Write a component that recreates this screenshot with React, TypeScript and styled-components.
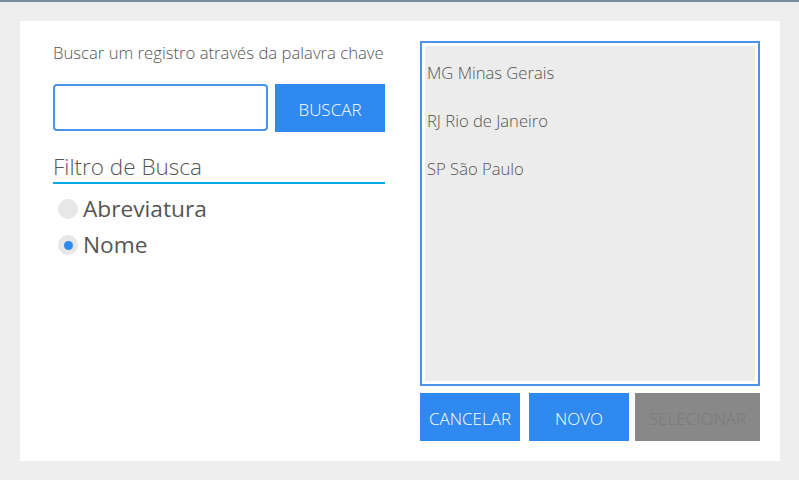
import React, { useState } from "react";
import styled, { createGlobalStyle } from "styled-components";

const GlobalStyle = createGlobalStyle`
  html, body {
    margin: 0;
    padding: 0;
    background: #eeeeee;
    font-family: "Open Sans", "Noto Sans", sans-serif;
  }
`;

const Page = styled.div`
  width: 799px;
  height: 480px;
  box-sizing: border-box;
  border-top: 2px solid #7a8b9d;
  padding: 19px 19px 19px 20px;
`;

const Panel = styled.div`
  height: 440px;
  box-sizing: border-box;
  background: #ffffff;
  padding: 20px 20px 20px 33px;
  display: grid;
  grid-template-columns: 332px 340px;
  column-gap: 35px;
`;

const LeftColumn = styled.div`
  display: flex;
  flex-direction: column;
`;

const Hint = styled.p`
  margin: 0;
  padding-top: 2px;
  font-size: 16.7px;
  font-weight: 300;
  color: #555555;
  line-height: 20px;
  white-space: nowrap;
`;

const SearchRow = styled.div`
  display: flex;
  gap: 7px;
  margin-top: 21px;
`;

const SearchInput = styled.input`
  width: 215px;
  height: 47px;
  box-sizing: border-box;
  border: 2px solid #4a92ea;
  border-radius: 4px;
  outline: none;
  font-size: 16px;
  padding: 0 8px;
`;

const Button = styled.button<{ $disabled?: boolean; $width: number }>`
  width: ${(p) => p.$width}px;
  height: 48px;
  border: none;
  border-radius: 0;
  background: ${(p) => (p.$disabled ? "#888888" : "#2f89ee")};
  color: ${(p) => (p.$disabled ? "#7a7a7a" : "#ffffff")};
  font-family: "Open Sans", sans-serif;
  font-size: 17px;
  font-weight: 300;
  padding: 2px 0 0;
  white-space: nowrap;
  cursor: ${(p) => (p.$disabled ? "default" : "pointer")};
`;

const SectionTitle = styled.h2`
  margin: 21px 0 0;
  font-size: 22.5px;
  font-weight: 300;
  color: #555555;
  line-height: 28px;
  border-bottom: 2px solid #00a6e6;
  padding-bottom: 1px;
`;

const RadioList = styled.div`
  display: flex;
  flex-direction: column;
  gap: 6px;
  margin-top: 10px;
  padding-left: 5px;
`;

const RadioRow = styled.label`
  display: flex;
  align-items: center;
  gap: 5px;
  font-size: 22.7px;
  color: #555555;
  line-height: 30px;
  cursor: pointer;
`;

const RadioDot = styled.span<{ $checked: boolean }>`
  width: 20px;
  height: 20px;
  border-radius: 50%;
  background: #e6e7e6;
  display: flex;
  align-items: center;
  justify-content: center;
  &::after {
    content: "";
    width: 9px;
    height: 9px;
    border-radius: 50%;
    background: ${(p) => (p.$checked ? "#2f89ee" : "transparent")};
  }
`;

const RightColumn = styled.div`
  display: flex;
  flex-direction: column;
  gap: 7px;
`;

const ListBox = styled.div`
  height: 345px;
  box-sizing: border-box;
  border: 2px solid #4a92ea;
  padding: 3px;
  background: #ffffff;
`;

const ListInner = styled.div`
  height: 100%;
  background: #ebeceb;
  padding-top: 3px;
  box-sizing: border-box;
`;

const ListItem = styled.div`
  font-size: 16.6px;
  font-weight: 300;
  color: #555555;
  line-height: 48px;
  height: 48px;
  padding-left: 2px;
`;

const ButtonRow = styled.div`
  display: flex;
`;

const states = [
  { uf: "MG", name: "Minas Gerais" },
  { uf: "RJ", name: "Rio de Janeiro" },
  { uf: "SP", name: "São Paulo" },
];

const App = () => {
  const [filter, setFilter] = useState("nome");

  return (
    <Page>
      <GlobalStyle />
      <Panel>
        <LeftColumn>
          <Hint>Buscar um registro através da palavra chave</Hint>
          <SearchRow>
            <SearchInput />
            <Button $width={110}>BUSCAR</Button>
          </SearchRow>
          <SectionTitle>Filtro de Busca</SectionTitle>
          <RadioList>
            <RadioRow onClick={() => setFilter("abrev")}>
              <RadioDot $checked={filter === "abrev"} />
              Abreviatura
            </RadioRow>
            <RadioRow onClick={() => setFilter("nome")}>
              <RadioDot $checked={filter === "nome"} />
              Nome
            </RadioRow>
          </RadioList>
        </LeftColumn>
        <RightColumn>
          <ListBox>
            <ListInner>
              {states.map((s) => (
                <ListItem key={s.uf}>
                  {s.uf} {s.name}
                </ListItem>
              ))}
            </ListInner>
          </ListBox>
          <ButtonRow>
            <Button $width={100}>CANCELAR</Button>
            <Button $width={100} style={{ marginLeft: 9 }}>
              NOVO
            </Button>
            <Button $width={125} $disabled style={{ marginLeft: 6 }}>
              SELECIONAR
            </Button>
          </ButtonRow>
        </RightColumn>
      </Panel>
    </Page>
  );
};

export default App;
